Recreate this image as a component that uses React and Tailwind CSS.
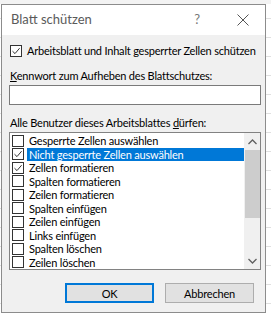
import React from 'react';

const FONT = { fontFamily: 'Lato, "Noto Sans", sans-serif' };

const items = [
  { label: 'Gesperrte Zellen auswählen', checked: false },
  { label: 'Nicht gesperrte Zellen auswählen', checked: true, selected: true },
  { label: 'Zellen formatieren', checked: true },
  { label: 'Spalten formatieren', checked: false },
  { label: 'Zeilen formatieren', checked: false },
  { label: 'Spalten einfügen', checked: false },
  { label: 'Zeilen einfügen', checked: false },
  { label: 'Links einfügen', checked: false },
  { label: 'Spalten löschen', checked: false },
  { label: 'Zeilen löschen', checked: false },
];

const Check = ({ checked }) => (
  <div className="w-[12px] h-[12px] shrink-0 bg-white border border-[#333] flex items-center justify-center">
    {checked && (
      <svg width="10" height="10" viewBox="0 0 10 10">
        <path d="M1.5 5.2 L4 7.6 L8.6 2.2" fill="none" stroke="#333" strokeWidth="1" />
      </svg>
    )}
  </div>
);

export default function App() {
  return (
    <div className="w-[271px] h-[316px] bg-white overflow-hidden relative text-black" style={FONT}>
      {/* spreadsheet behind */}
      <div className="absolute inset-0 bg-[repeating-linear-gradient(to_bottom,transparent_0px,transparent_18px,#e0e0e0_18px,#e0e0e0_19px)]" />
      <div className="absolute left-0 right-0 top-0 h-[4px] bg-[#f3f3f3]" />

      <div className="relative ml-[1px] mt-[4px] w-[265px] h-[309px] border border-[#8c8c8c] bg-[#f0f0f0] flex flex-col">
        {/* title bar */}
        <div className="h-[30px] bg-white flex items-center shrink-0">
          <span className="pl-[9px] text-[13px] text-[#5a5a5a] whitespace-nowrap">Blatt schützen</span>
          <span className="ml-auto mr-[37px] text-[13px] text-[#777]">?</span>
          <svg width="12" height="12" viewBox="0 0 12 12" className="mr-[16px]">
            <path d="M0.5 0.5 L11.5 11.5 M11.5 0.5 L0.5 11.5" stroke="#555" strokeWidth="1" />
          </svg>
        </div>

        {/* body */}
        <div className="flex flex-col px-[7px] text-[11px] tracking-[-0.2px] leading-[13px] whitespace-nowrap">
          <div className="flex items-center gap-[5px] mt-[9px] ml-[1px]">
            <Check checked />
            <span>Arbeitsblatt und Inhalt gesperrter Zellen schützen</span>
          </div>

          <div className="mt-[12px] ml-[1px]">
            <span className="underline">K</span>ennwort zum Aufheben des Blattschutzes:
          </div>

          <div className="mt-[3px] h-[20px] w-[252px] bg-white border border-[#7a7a7a]" />

          <div className="mt-[11px] ml-[1px]">
            Alle Benutzer dieses Arbeitsblattes <span className="underline">d</span>ürfen:
          </div>

          <div className="mt-[3px] h-[138px] w-[252px] bg-white border border-[#828282] flex">
            <div className="flex-1 flex flex-col pl-[2px] pt-[1px]">
              {items.map((it) => (
                <div key={it.label} className="h-[13.6px] flex items-center">
                  <Check checked={it.checked} />
                  <div
                    className={`ml-[3px] flex-1 h-full flex items-center pl-[2px] ${
                      it.selected ? 'bg-[#0078d7] text-white' : ''
                    }`}
                  >
                    {it.label}
                  </div>
                </div>
              ))}
            </div>
            {/* scrollbar */}
            <div className="w-[16px] bg-[#f0f0f0] flex flex-col items-center">
              <div className="h-[17px] flex items-center justify-center">
                <svg width="9" height="6" viewBox="0 0 9 6">
                  <path d="M0.5 5 L4.5 1 L8.5 5" fill="none" stroke="#606060" strokeWidth="1.3" />
                </svg>
              </div>
              <div className="w-[15px] h-[68px] bg-[#cdcdcd]" />
              <div className="flex-1" />
              <div className="h-[17px] flex items-center justify-center">
                <svg width="9" height="6" viewBox="0 0 9 6">
                  <path d="M0.5 1 L4.5 5 L8.5 1" fill="none" stroke="#606060" strokeWidth="1.3" />
                </svg>
              </div>
            </div>
          </div>

          <div className="mt-[13px] flex justify-end gap-[11px] mr-[4px]">
            <button className="w-[89px] h-[20px] bg-[#e1e1e1] border-2 border-[#0078d7] text-[11px] leading-none">
              OK
            </button>
            <button className="w-[89px] h-[20px] bg-[#e1e1e1] border border-[#adadad] text-[11px] leading-none">
              Abbrechen
            </button>
          </div>
        </div>
      </div>
    </div>
  );
}
